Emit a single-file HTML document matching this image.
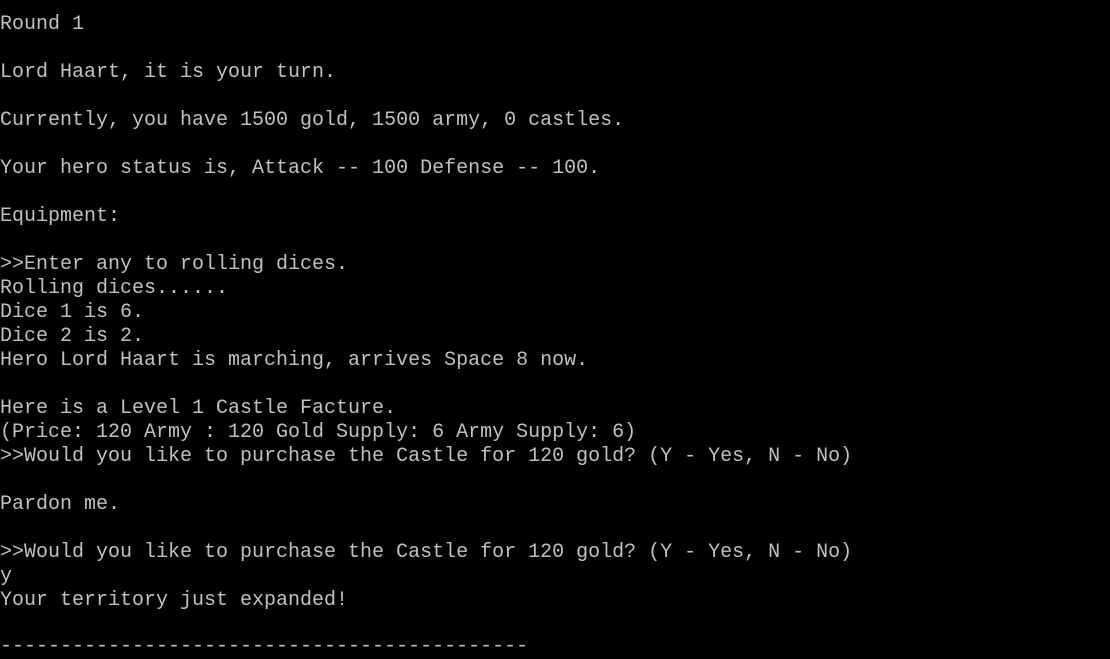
<!DOCTYPE html>
<html><head><meta charset="utf-8"><style>
html,body{margin:0;padding:0;background:#000;width:1110px;height:652px;overflow:hidden}
pre{margin:0;position:absolute;left:0;top:13px;font-family:"Liberation Mono","Noto Sans CJK SC",monospace;font-size:20px;line-height:24px;color:#c0c0c0;white-space:pre}
#d{top:635px}
</style></head><body><pre>Round 1

Lord Haart, it is your turn.

Currently, you have 1500 gold, 1500 army, 0 castles.

Your hero status is, Attack -- 100 Defense -- 100.

Equipment:

&gt;&gt;Enter any to rolling dices.
Rolling dices......
Dice 1 is 6.
Dice 2 is 2.
Hero Lord Haart is marching, arrives Space 8 now.

Here is a Level 1 Castle Facture.
(Price: 120 Army : 120 Gold Supply: 6 Army Supply: 6)
&gt;&gt;Would you like to purchase the Castle for 120 gold? (Y - Yes, N - No)

Pardon me.

&gt;&gt;Would you like to purchase the Castle for 120 gold? (Y - Yes, N - No)
y
Your territory just expanded!</pre>
<pre id="d">--------------------------------------------</pre></body></html>
